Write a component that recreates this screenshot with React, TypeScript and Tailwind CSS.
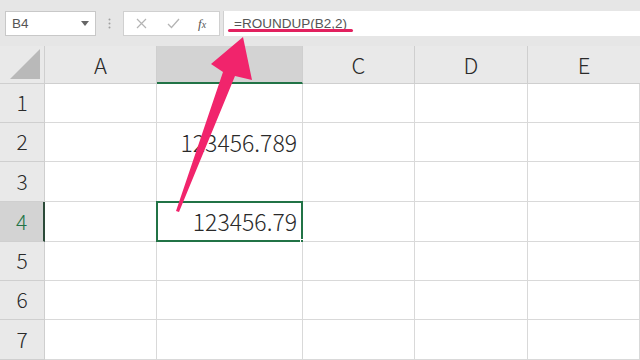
import React from "react";

const cols = [
  { key: "A", w: "w-[112px]" },
  { key: "B", w: "w-[146px]" },
  { key: "C", w: "w-[112px]" },
  { key: "D", w: "w-[113px]" },
  { key: "E", w: "w-[112px]" },
];

const rows = [
  { n: 1, h: "h-[39px]" },
  { n: 2, h: "h-[39px]" },
  { n: 3, h: "h-[40px]" },
  { n: 4, h: "h-[40px]" },
  { n: 5, h: "h-[39px]" },
  { n: 6, h: "h-[39px]" },
  { n: 7, h: "h-[40px]" },
];

const cellFont = { fontFamily: '"Noto Sans CJK JP", "Noto Sans", sans-serif' };

function Cell({ row, col }: { row: number; col: string }) {
  const selected = row === 4 && col === "B";
  let text = "";
  if (col === "B" && row === 2) text = "123456.789";
  if (col === "B" && row === 4) text = "123456.79";
  return (
    <div
      className={`relative flex items-center justify-end pr-[5px] border-r border-b border-[#d9d9d9] bg-white text-[23px] font-light text-[#2a2a2a] ${
        cols.find((c) => c.key === col)!.w
      }`}
      style={cellFont}
    >
      {text}
      {selected && (
        <>
          <div className="absolute -left-[1px] -top-[1px] right-[-1px] bottom-[-1px] border-2 border-[#217346]" />
          <div className="absolute right-[-3px] bottom-[-3px] w-[5px] h-[5px] bg-[#217346] border border-white" />
        </>
      )}
    </div>
  );
}

export default function App() {
  return (
    <div
      className="relative w-[640px] h-[360px] overflow-hidden bg-white"
      style={{ fontFamily: '"Liberation Sans", Arial, sans-serif' }}
    >
      {/* Formula bar area */}
      <div className="h-[46px] bg-[#e6e6e6] flex items-start pt-[11px]">
        <div className="ml-[5px] w-[91px] h-[25px] bg-white border border-[#c8c8c8] flex items-center justify-between pl-[6px] pr-[6px]">
          <span className="text-[13.5px] text-[#555] pt-[1px]">B4</span>
          <svg width="8" height="5" viewBox="0 0 8 5">
            <path d="M0 0 L8 0 L4 5 Z" fill="#666" />
          </svg>
        </div>
        <div className="w-[27px] h-[25px] flex items-center justify-center text-[#9a9a9a]">
          <svg width="3" height="11" viewBox="0 0 3 11">
            <circle cx="1.5" cy="1.5" r="1" fill="#a0a0a0" />
            <circle cx="1.5" cy="5.5" r="1" fill="#a0a0a0" />
            <circle cx="1.5" cy="9.5" r="1" fill="#a0a0a0" />
          </svg>
        </div>
        <div className="w-[97px] h-[25px] bg-white border border-[#d0d0d0] flex items-center pl-[12px]">
          <svg width="11" height="11" viewBox="0 0 11 11">
            <path d="M1 1 L10 10 M10 1 L1 10" stroke="#b4b4b4" strokeWidth="1.2" fill="none" />
          </svg>
          <svg width="13" height="11" viewBox="0 0 13 11" className="ml-[20px]">
            <path d="M1 6 L4.5 9.5 L12 1" stroke="#b4b4b4" strokeWidth="1.3" fill="none" />
          </svg>
          <span
            className="ml-[18px] text-[13px] italic text-[#555]"
            style={{ fontFamily: '"Liberation Serif", serif' }}
          >
            f<span className="text-[10px]">x</span>
          </span>
        </div>
        <div className="ml-[3px] flex-1 h-[25px] bg-white border-l border-[#d0d0d0] relative flex items-center pl-[10px]">
          <span className="text-[13.5px] text-[#555] leading-none pt-[1px]">=ROUNDUP(B2,2)</span>
          <div className="absolute left-[4px] top-[18px] w-[125px] h-[3px] rounded-full bg-[#e2215f]" />
        </div>
      </div>

      {/* Column headers */}
      <div className="flex h-[38px] bg-[#e9e9e9]">
        <div className="w-[45px] h-full border-r border-b border-[#cfcfcf] flex items-end justify-end pr-[4px] pb-[4px]">
          <svg width="30" height="30" viewBox="0 0 30 30">
            <path d="M30 0 L30 30 L0 30 Z" fill="#b9b9b9" />
          </svg>
        </div>
        {cols.map((c) => (
          <div
            key={c.key}
            className={`${c.w} h-full flex items-center justify-center text-[22px] font-light ${
              c.key === "B"
                ? "bg-[#d3d3d3] border-b-2 border-[#217346] text-[#2a2a2a]"
                : "border-b border-[#cfcfcf] text-[#2a2a2a]"
            } ${c.key === "E" ? "" : "border-r border-r-[#cfcfcf]"}`}
            style={cellFont}
          >
            {c.key}
          </div>
        ))}
      </div>

      {/* Rows */}
      {rows.map((r) => (
        <div key={r.n} className={`flex ${r.h}`}>
          <div
            className={`w-[45px] h-full flex items-center justify-center text-[21px] font-light border-b border-[#cfcfcf] ${
              r.n === 4
                ? "bg-[#d3d3d3] text-[#217346] border-r-2 border-r-[#2b4a38]"
                : "bg-[#e9e9e9] text-[#2a2a2a] border-r border-r-[#cfcfcf]"
            }`}
            style={cellFont}
          >
            {r.n}
          </div>
          {cols.map((c) => (
            <Cell key={c.key} row={r.n} col={c.key} />
          ))}
        </div>
      ))}

      {/* Annotation arrow */}
      <svg
        className="absolute left-0 top-0 pointer-events-none"
        width="640"
        height="360"
        viewBox="0 0 640 360"
      >
        <polygon
          points="176,211 223,72 211,64 243,37 252,80 235,76 179,212"
          fill="#f1246c"
          strokeLinejoin="round"
        />
      </svg>
    </div>
  );
}
